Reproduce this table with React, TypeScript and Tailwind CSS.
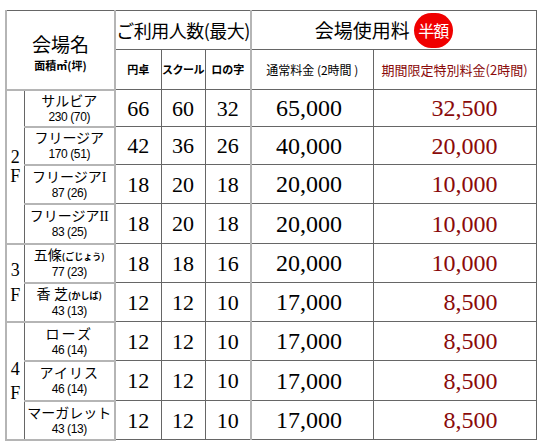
import React from "react";

type Row = {
  name: React.ReactNode;
  sub: string;
  a: string;
  b: string;
  c: string;
  p: string;
  d: string;
  h: string;
};

const serifJ = { fontFamily: '"Liberation Serif", "Noto Sans CJK JP", serif' };
const sansJ = { fontFamily: '"Noto Sans CJK JP", sans-serif' };

const floors: { label: string; lh: string; rows: Row[] }[] = [
  {
    label: "2F",
    lh: "leading-[19px]",
    rows: [
      { name: "サルビア", sub: "230 (70)", a: "66", b: "60", c: "32", p: "65,000", d: "32,500", h: "h-[37px]" },
      { name: "フリージア", sub: "170 (51)", a: "42", b: "36", c: "26", p: "40,000", d: "20,000", h: "h-[38px]" },
      { name: "フリージアI", sub: "87 (26)", a: "18", b: "20", c: "18", p: "20,000", d: "10,000", h: "h-[39px]" },
      { name: "フリージアII", sub: "83 (25)", a: "18", b: "20", c: "18", p: "20,000", d: "10,000", h: "h-[40px]" },
    ],
  },
  {
    label: "3F",
    lh: "leading-[25px]",
    rows: [
      {
        name: (
          <>
            五條<span className="text-[9px] font-bold" style={sansJ}>(ごじょう)</span>
          </>
        ),
        sub: "77 (23)",
        a: "18",
        b: "18",
        c: "16",
        p: "20,000",
        d: "10,000",
        h: "h-[39px]",
      },
      {
        name: (
          <>
            香 芝<span className="text-[9px] font-bold" style={sansJ}>(かしば)</span>
          </>
        ),
        sub: "43 (13)",
        a: "12",
        b: "12",
        c: "10",
        p: "17,000",
        d: "8,500",
        h: "h-[39px]",
      },
    ],
  },
  {
    label: "4F",
    lh: "leading-[24px]",
    rows: [
      { name: <span className="tracking-[2px]">ローズ</span>, sub: "46 (14)", a: "12", b: "12", c: "10", p: "17,000", d: "8,500", h: "h-[39px]" },
      { name: <span className="tracking-[1px]">アイリス</span>, sub: "46 (14)", a: "12", b: "12", c: "10", p: "17,000", d: "8,500", h: "h-[40px]" },
      { name: "マーガレット", sub: "43 (13)", a: "12", b: "12", c: "10", p: "17,000", d: "8,500", h: "h-[39px]" },
    ],
  },
];

const numCell = "border border-[#666] text-center text-[22px] p-0 align-middle";

export default function App() {
  return (
    <div className="w-[540px] h-[448px] bg-white pt-[10px] pl-[5px]">
      <table className="border-collapse table-fixed w-[530px] text-black" style={serifJ}>
        <colgroup>
          <col className="w-[18px]" />
          <col className="w-[91px]" />
          <col className="w-[46px]" />
          <col className="w-[44px]" />
          <col className="w-[46px]" />
          <col className="w-[122px]" />
          <col className="w-[163px]" />
        </colgroup>
        <tbody>
          <tr className="h-[39px]">
            <td
              rowSpan={2}
              colSpan={2}
              className="border-2 border-[#b5b5b5] border-t-[#666] border-t-1 text-center align-middle p-0"
              style={sansJ}
            >
              <div className="text-[19px] leading-[22px] pt-[6px]">会場名</div>
              <div className="text-[11px] font-bold leading-[14px] mt-[3px]">面積㎡(坪)</div>
            </td>
            <td colSpan={3} className="border border-[#666] border-l-2 border-l-[#b5b5b5] border-r-2 border-r-[#b5b5b5] text-center p-0" style={sansJ}>
              <span className="text-[18px] tracking-[-0.5px]">ご利用人数(最大)</span>
            </td>
            <td colSpan={2} className="border border-[#666] text-center p-0" style={sansJ}>
              <div className="flex items-center justify-center gap-[4px] pr-[20px]">
                <span className="text-[19px]">会場使用料</span>
                <span className="w-[39px] h-[35px] rounded-full bg-[#f00000] text-white text-[16px] flex items-center justify-center tracking-[-1px]">
                  半額
                </span>
              </div>
            </td>
          </tr>
          <tr className="h-[40px]">
            <td className="border border-[#666] border-l-2 border-l-[#b5b5b5] text-center text-[11px] font-bold p-0" style={sansJ}>
              円卓
            </td>
            <td className="border border-[#666] text-center text-[11px] font-bold p-0 tracking-[-0.5px]" style={sansJ}>
              スクール
            </td>
            <td className="border border-[#666] border-r-2 border-r-[#b5b5b5] text-center text-[11px] font-bold p-0" style={sansJ}>
              ロの字
            </td>
            <td className="border border-[#666] text-center text-[12px] p-0" style={sansJ}>
              通常料金 (2時間 )
            </td>
            <td className="border border-[#666] text-center text-[13px] text-[#8a0a0a] p-0" style={sansJ}>
              期間限定特別料金(2時間)
            </td>
          </tr>
          {floors.map((f) =>
            f.rows.map((r, i) => (
              <tr key={f.label + i} className={r.h}>
                {i === 0 && (
                  <td
                    rowSpan={f.rows.length}
                    className={`border-2 border-[#b5b5b5] border-r-1 border-r-[#666] text-center text-[18px] p-0 align-middle ${f.lh}`}
                  >
                    <div>{f.label[0]}</div>
                    <div>{f.label[1]}</div>
                  </td>
                )}
                <td className="border-2 border-[#b5b5b5] border-l-1 border-l-[#666] text-center p-0 align-middle">
                  <div className="text-[14px] leading-[18px] whitespace-nowrap">{r.name}</div>
                  <div
                    className="text-[12px] leading-[13px] tracking-[-0.4px]"
                    style={{ fontFamily: '"Liberation Sans", sans-serif' }}
                  >
                    {r.sub}
                  </div>
                </td>
                <td className={`${numCell} border-l-2 border-l-[#b5b5b5]`}>{r.a}</td>
                <td className={numCell}>{r.b}</td>
                <td className={`${numCell} border-r-2 border-r-[#b5b5b5]`}>{r.c}</td>
                <td className="border border-[#666] text-left text-[24px] pl-[24px] p-0 align-middle">{r.p}</td>
                <td className="border border-[#666] text-right text-[24px] pr-[38px] p-0 align-middle text-[#8a0a0a]">
                  {r.d}
                </td>
              </tr>
            ))
          )}
        </tbody>
      </table>
    </div>
  );
}
